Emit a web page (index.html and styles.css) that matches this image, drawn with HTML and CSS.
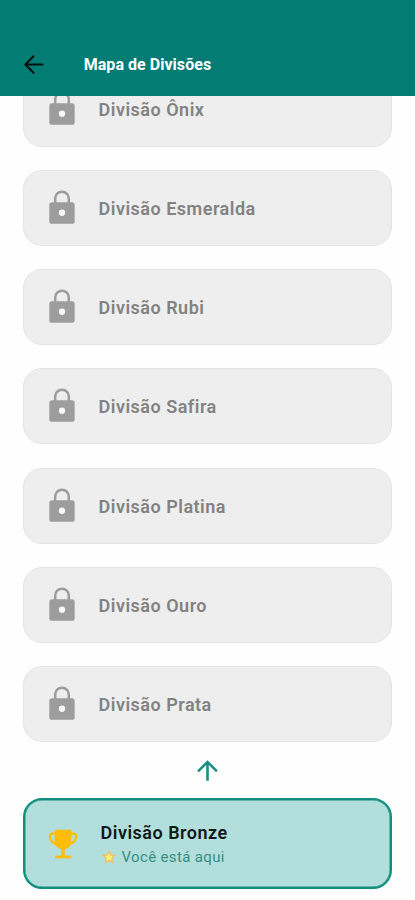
FILE: index.html
```html
<!DOCTYPE html>
<html lang="pt-BR">
<head>
<meta charset="utf-8">
<title>Mapa de Divisões</title>
<link rel="stylesheet" href="styles.css">
</head>
<body>
<svg class="defs" width="0" height="0" aria-hidden="true">
  <symbol id="lock" viewBox="0 0 24 24"><path d="M7.700 9V6a4.300 4.300 0 0 1 8.600 0v3" fill="none" stroke="#9d9d9d" stroke-width="1.600"/><rect x="4" y="8.300" width="16" height="13.700" rx="1.700"/><circle cx="12" cy="15" r="2" fill="#f8f8f8"/></symbol>
</svg>
<header class="bar">
  <svg class="back" viewBox="0 0 24 24"><path d="M20 12H5M12 4.600 4.800 12l7.200 7.400"/></svg>
  <h1 class="title">Mapa de Divisões</h1>
</header>
<main class="list">
  <div class="card"><svg class="icon"><use href="#lock"/></svg><span class="name">Divisão Ônix</span></div>
  <div class="card"><svg class="icon"><use href="#lock"/></svg><span class="name">Divisão Esmeralda</span></div>
  <div class="card"><svg class="icon"><use href="#lock"/></svg><span class="name">Divisão Rubi</span></div>
  <div class="card"><svg class="icon"><use href="#lock"/></svg><span class="name">Divisão Safira</span></div>
  <div class="card"><svg class="icon"><use href="#lock"/></svg><span class="name">Divisão Platina</span></div>
  <div class="card"><svg class="icon"><use href="#lock"/></svg><span class="name">Divisão Ouro</span></div>
  <div class="card"><svg class="icon"><use href="#lock"/></svg><span class="name">Divisão Prata</span></div>
  <div class="step"><svg class="up" viewBox="0 0 24 24"><path d="M4 12l1.410 1.410L11 7.830V20h2V7.830l5.580 5.590L20 12l-8-8-8 8z"/></svg></div>
  <div class="card current">
    <svg class="icon" viewBox="0 0 24 24"><path d="M7.500 5.500H5.500Q3.700 5.500 3.700 7.200Q3.900 11 8 12.200M16.500 5.500h2Q20.300 5.500 20.300 7.200Q20.100 11 16 12.200" fill="none" stroke="#fdbd08" stroke-width="1.400" stroke-linecap="round"/><path d="M7.500 3h9q.8 0 .8.800V10q-.2 4.500-4.200 5.500V19.300h3.200q.8 0 .8.850t-.8.850H7.700q-.8 0-.8-.85t.8-.85h3.200V15.500Q6.900 14.500 6.700 10V3.800q0-.8.8-.8z"/></svg>
    <div class="info">
      <span class="name">Divisão Bronze</span>
      <span class="here"><svg class="star" viewBox="0 0 16 16"><path class="glow" d="M8 1l2.100 4.500 4.900.6-3.600 3.400.9 4.900L8 12l-4.300 2.400.9-4.900L1 6.100l4.900-.6z"/><path class="core" d="M8 3.800l1.400 2.800 3 .4-2.200 2 .5 3L8 10.600l-2.700 1.400.5-3-2.200-2 3-.4z"/></svg>Você está aqui</span>
    </div>
  </div>
</main>
</body>
</html>
```
FILE: styles.css
```css
* { box-sizing: border-box; }
body {
  margin: 0;
  height: 900px;
  display: flex;
  flex-direction: column;
  overflow: hidden;
  background: #fefefe;
  font-family: Roboto, sans-serif;
}
.defs { display: none; }
.bar {
  flex: none;
  height: 96px;
  padding: 32px 19.500px 0;
  display: flex;
  align-items: center;
  background: #037c74;
}
.back {
  width: 27px;
  height: 27px;
  fill: none;
  stroke: #06110f;
  stroke-width: 1.800;
  stroke-linecap: round;
  stroke-linejoin: round;
}
.title {
  margin: 1px 0 0 37.200px;
  font-size: 16px;
  font-weight: 700;
  line-height: 20px;
  letter-spacing: .04px;
  color: #fff;
}
.list {
  flex: 1;
  min-height: 0;
  display: flex;
  flex-direction: column;
  justify-content: flex-end;
  padding: 0 23px 11px;
  overflow: hidden;
}
.card {
  flex: none;
  height: 76px;
  margin-bottom: 23.200px;
  padding-left: 18.500px;
  display: flex;
  align-items: center;
  border: 1px solid #e4e4e4;
  border-radius: 19px;
  background: #eee;
}
.icon {
  flex: none;
  width: 38px;
  height: 38px;
  fill: #9d9d9d;
}
.name {
  margin: 2px 0 0 18px;
  font-size: 18px;
  font-weight: 600;
  line-height: 22px;
  letter-spacing: .5px;
  color: #828282;
}
.step {
  flex: none;
  height: 56px;
  margin-top: -23.200px;
  display: flex;
  align-items: center;
  justify-content: center;
}
.up {
  width: 31px;
  height: 31px;
  fill: #16917f;
}
.current {
  height: 91px;
  margin-bottom: 0;
  border: 2px solid #128e7e;
  box-shadow: inset 0 0 0 .5px #128e7e;
  background: #b2dfdb;
}
.current .icon { fill: #fdbd08; }
.info {
  margin-left: 19px;
  display: flex;
  flex-direction: column;
}
.info .name {
  margin-left: 0;
  color: #101818;
}
.here {
  display: flex;
  align-items: center;
  gap: 5px;
  margin-top: 2px;
  font-size: 15px;
  line-height: 22px;
  letter-spacing: .35px;
  color: #378f83;
}
.star { width: 16px; height: 16px; }
.glow { fill: #f6b95a; }
.core { fill: #fff07a; }
```
